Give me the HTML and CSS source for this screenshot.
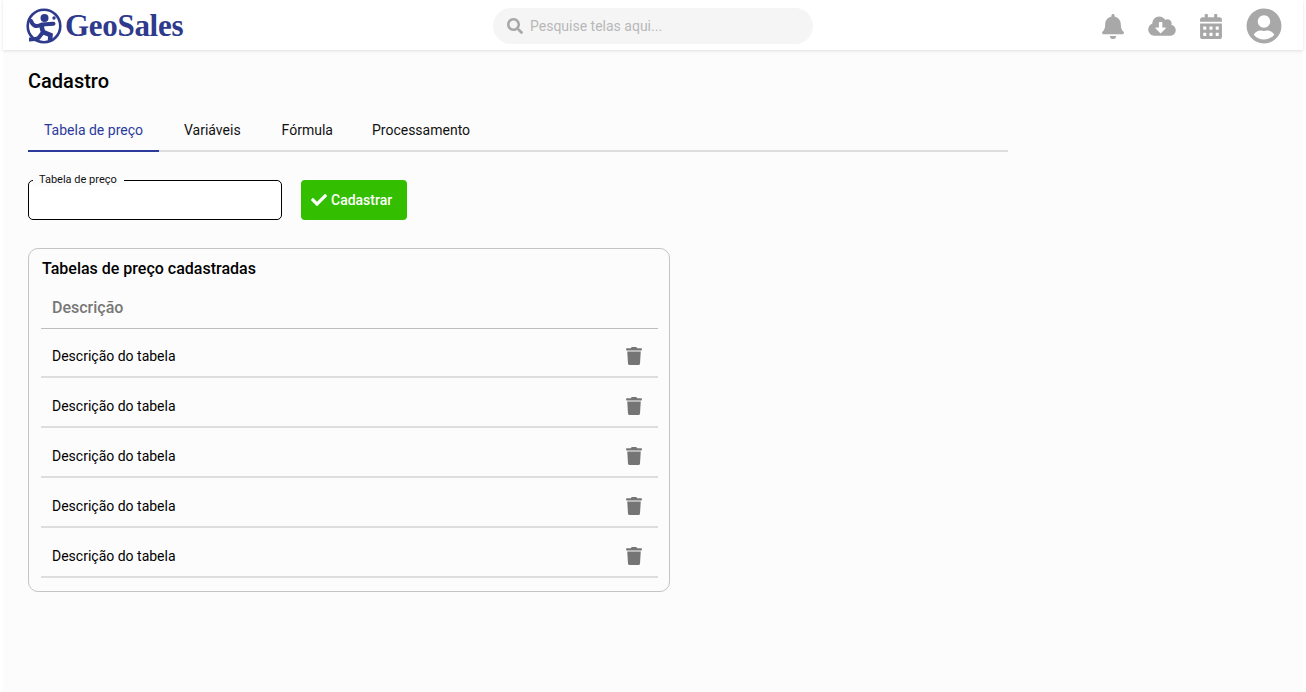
FILE: index.html
```html
<!DOCTYPE html>
<html lang="pt">
<head>
<meta charset="utf-8">
<title>GeoSales</title>
<link rel="stylesheet" href="styles.css">
</head>
<body>
<div class="app">
  <header class="topbar">
    <div class="logo">
      <svg class="logo-mark" viewBox="0 0 36 36">
        <circle cx="18" cy="18" r="16.3" fill="none" stroke="#2e3a8c" stroke-width="2.6"/>
        <circle cx="18.5" cy="10" r="4" fill="#2e3a8c"/>
        <circle cx="28" cy="10" r="1.7" fill="#2e3a8c"/>
        <path d="M5 13c2 5 5 6.500 11 3.500l11.500-.8" fill="none" stroke="#2e3a8c" stroke-width="4" stroke-linecap="round"/>
        <path d="M16 15.500c-.5 4 0 7 2 9l6.500 2.500-.5 6" fill="none" stroke="#2e3a8c" stroke-width="4.600"/>
        <path d="M17.500 23.500l-5 6.500c-3 1.500-6 1.500-9.500 1.500" fill="none" stroke="#2e3a8c" stroke-width="4"/>
      </svg>
      <span class="logo-text">GeoSales</span>
    </div>
    <div class="search">
      <svg class="search-icon" viewBox="0 0 512 512"><path d="M505 442.7L405.3 343c-4.500-4.500-10.600-7-17-7H372c27.600-35.300 44-79.700 44-128C416 93.100 322.900 0 208 0S0 93.100 0 208s93.100 208 208 208c48.300 0 92.700-16.400 128-44v16.300c0 6.400 2.500 12.500 7 17l99.700 99.700c9.400 9.400 24.600 9.400 33.900 0l28.300-28.300c9.400-9.400 9.400-24.600.1-34zM208 336c-70.700 0-128-57.200-128-128 0-70.700 57.200-128 128-128 70.700 0 128 57.200 128 128 0 70.700-57.200 128-128 128z"/></svg>
      <span class="search-text">Pesquise telas aqui...</span>
    </div>
    <div class="actions">
      <svg class="icon-bell" viewBox="0 0 448 512"><path d="M224 512c35.32 0 63.97-28.65 63.97-64H160.03c0 35.35 28.65 64 63.97 64zm215.39-149.71c-19.32-20.76-55.47-51.99-55.47-154.29 0-77.7-54.48-139.9-127.94-155.16V32c0-17.67-14.32-32-31.98-32s-31.98 14.33-31.98 32v20.84C118.56 68.1 64.08 130.3 64.08 208c0 102.3-36.15 133.53-55.47 154.29-6 6.45-8.66 14.16-8.61 21.71.11 16.4 12.98 32 32.1 32h383.8c19.12 0 32-15.6 32.1-32 .05-7.55-2.61-15.27-8.61-21.71z"/></svg>
      <svg class="icon-cloud" viewBox="0 0 640 512"><path d="M537.6 226.6c4.1-10.7 6.4-22.4 6.4-34.6 0-53-43-96-96-96-19.7 0-38.1 6-53.3 16.2C367 64.2 315.3 32 256 32c-88.4 0-160 71.6-160 160 0 2.7.1 5.4.2 8.1C40.2 219.8 0 273.2 0 336c0 79.5 64.5 144 144 144h368c70.7 0 128-57.3 128-128 0-61.9-44-113.6-102.4-125.4zm-132.9 88.7L299.3 420.7c-6.2 6.2-16.4 6.2-22.6 0L171.3 315.3c-10.1-10.1-2.9-27.3 11.3-27.3H248V176c0-8.8 7.2-16 16-16h48c8.8 0 16 7.2 16 16v112h65.4c14.2 0 21.4 17.2 11.3 27.3z"/></svg>
      <svg class="icon-calendar" viewBox="0 0 448 512"><path d="M0 464c0 26.5 21.5 48 48 48h352c26.5 0 48-21.5 48-48V192H0v272zm320-196c0-6.6 5.4-12 12-12h40c6.6 0 12 5.4 12 12v40c0 6.6-5.4 12-12 12h-40c-6.6 0-12-5.4-12-12v-40zm0 128c0-6.6 5.4-12 12-12h40c6.6 0 12 5.4 12 12v40c0 6.6-5.4 12-12 12h-40c-6.6 0-12-5.4-12-12v-40zM192 268c0-6.6 5.4-12 12-12h40c6.6 0 12 5.4 12 12v40c0 6.6-5.4 12-12 12h-40c-6.6 0-12-5.4-12-12v-40zm0 128c0-6.6 5.4-12 12-12h40c6.6 0 12 5.4 12 12v40c0 6.6-5.4 12-12 12h-40c-6.6 0-12-5.4-12-12v-40zM64 268c0-6.6 5.4-12 12-12h40c6.6 0 12 5.4 12 12v40c0 6.6-5.4 12-12 12H76c-6.6 0-12-5.4-12-12v-40zm0 128c0-6.6 5.4-12 12-12h40c6.6 0 12 5.4 12 12v40c0 6.6-5.4 12-12 12h-40c-6.6 0-12-5.4-12-12v-40zM400 64h-48V16c0-8.8-7.2-16-16-16h-32c-8.8 0-16 7.2-16 16v48H160V16c0-8.8-7.2-16-16-16h-32c-8.8 0-16 7.2-16 16v48H48C21.5 64 0 85.5 0 112v48h448v-48c0-26.5-21.5-48-48-48z"/></svg>
      <svg class="icon-user" viewBox="0 0 496 512"><path d="M248 8C111 8 0 119 0 256s111 248 248 248 248-111 248-248S385 8 248 8zm0 96c48.6 0 88 39.4 88 88s-39.4 88-88 88-88-39.4-88-88 39.4-88 88-88zm0 344c-58.7 0-111.3-26.6-146.5-68.2 18.8-35.4 55.6-59.8 98.5-59.8 2.4 0 4.8.4 7.1 1.1 13 4.2 26.6 6.9 40.9 6.9 14.3 0 28-2.7 40.9-6.9 2.3-.7 4.7-1.1 7.1-1.1 42.9 0 79.7 24.4 98.5 59.8C359.3 421.4 306.7 448 248 448z"/></svg>
    </div>
  </header>
  <main class="content">
    <h1 class="page-title">Cadastro</h1>
    <nav class="tabs">
      <span class="tab tab-active">Tabela de preço</span>
      <span class="tab">Variáveis</span>
      <span class="tab">Fórmula</span>
      <span class="tab tab-last">Processamento</span>
    </nav>
    <form class="form-row">
      <div class="field"><span class="field-label">Tabela de preço</span></div>
      <div class="btn">
        <svg class="btn-icon" viewBox="0 0 512 512"><path d="M173.898 439.404l-166.4-166.4c-9.997-9.997-9.997-26.206 0-36.204l36.203-36.204c9.997-9.998 26.207-9.998 36.204 0L192 312.69 432.095 72.596c9.997-9.997 26.207-9.997 36.204 0l36.203 36.204c9.997 9.997 9.997 26.206 0 36.204l-294.4 294.401c-9.998 9.997-26.207 9.997-36.204-.001z"/></svg>
        <span>Cadastrar</span>
      </div>
    </form>
    <section class="card">
      <h2 class="card-title">Tabelas de preço cadastradas</h2>
      <div class="table-head">Descrição</div>
      <div class="table-row"><span>Descrição do tabela</span><svg class="trash" viewBox="0 0 448 512"><path d="M432 32H312l-9.4-18.7A24 24 0 0 0 281.1 0H166.8a23.72 23.72 0 0 0-21.4 13.3L136 32H16A16 16 0 0 0 0 48v32a16 16 0 0 0 16 16h416a16 16 0 0 0 16-16V48a16 16 0 0 0-16-16zM53.2 467a48 48 0 0 0 47.9 45h245.8a48 48 0 0 0 47.9-45L416 128H32z"/></svg></div>
      <div class="table-row"><span>Descrição do tabela</span><svg class="trash" viewBox="0 0 448 512"><path d="M432 32H312l-9.4-18.7A24 24 0 0 0 281.1 0H166.8a23.72 23.72 0 0 0-21.4 13.3L136 32H16A16 16 0 0 0 0 48v32a16 16 0 0 0 16 16h416a16 16 0 0 0 16-16V48a16 16 0 0 0-16-16zM53.2 467a48 48 0 0 0 47.9 45h245.8a48 48 0 0 0 47.9-45L416 128H32z"/></svg></div>
      <div class="table-row"><span>Descrição do tabela</span><svg class="trash" viewBox="0 0 448 512"><path d="M432 32H312l-9.4-18.7A24 24 0 0 0 281.1 0H166.8a23.72 23.72 0 0 0-21.4 13.3L136 32H16A16 16 0 0 0 0 48v32a16 16 0 0 0 16 16h416a16 16 0 0 0 16-16V48a16 16 0 0 0-16-16zM53.2 467a48 48 0 0 0 47.9 45h245.8a48 48 0 0 0 47.9-45L416 128H32z"/></svg></div>
      <div class="table-row"><span>Descrição do tabela</span><svg class="trash" viewBox="0 0 448 512"><path d="M432 32H312l-9.4-18.7A24 24 0 0 0 281.1 0H166.8a23.72 23.72 0 0 0-21.4 13.3L136 32H16A16 16 0 0 0 0 48v32a16 16 0 0 0 16 16h416a16 16 0 0 0 16-16V48a16 16 0 0 0-16-16zM53.2 467a48 48 0 0 0 47.9 45h245.8a48 48 0 0 0 47.9-45L416 128H32z"/></svg></div>
      <div class="table-row"><span>Descrição do tabela</span><svg class="trash" viewBox="0 0 448 512"><path d="M432 32H312l-9.4-18.7A24 24 0 0 0 281.1 0H166.8a23.72 23.72 0 0 0-21.4 13.3L136 32H16A16 16 0 0 0 0 48v32a16 16 0 0 0 16 16h416a16 16 0 0 0 16-16V48a16 16 0 0 0-16-16zM53.2 467a48 48 0 0 0 47.9 45h245.8a48 48 0 0 0 47.9-45L416 128H32z"/></svg></div>
    </section>
  </main>
</div>
</body>
</html>
```

FILE: styles.css
```css
* { box-sizing: border-box; }
html, body { margin: 0; height: 100%; background: #fff; overflow: hidden; }
body { font-family: Roboto, "Liberation Sans", sans-serif; color: #000; }
.app { margin: 0 3px; height: 692px; background: #fcfcfc; }
.topbar {
  height: 50px; background: #fff; box-shadow: 0 1px 3px rgba(0,0,0,.12);
  display: grid; grid-template-columns: 1fr 320px 1fr; align-items: center; padding: 2px 23px 0;
}
.logo { display: flex; align-items: center; gap: 3px; }
.logo-mark { width: 36px; height: 36px; flex: none; }
.logo-text { font: bold 31px "Liberation Serif", serif; color: #2e3a8c; letter-spacing: -.3px; }
.search { grid-column: 2; height: 36px; border-radius: 18px; background: #f5f5f5; display: flex; align-items: center; gap: 7px; padding: 0 14px; }
.search-icon { width: 16px; height: 16px; fill: #a8a8a8; }
.search-text { font-size: 14px; color: #b8b8b8; }
.actions { display: flex; justify-content: flex-end; align-items: center; margin-right: -2px; }
.actions svg { fill: #a8a8a8; display: block; }
.icon-bell { width: 22px; height: 25px; margin-right: 24px; }
.icon-cloud { width: 28px; height: 22px; margin-right: 24px; }
.icon-calendar { width: 22px; height: 25px; margin-right: 24px; }
.icon-user { width: 36px; height: 36px; }
.content { padding: 19px 25px 0; }
.page-title { margin: 0; font-size: 20px; font-weight: 500; line-height: 24px; }
.tabs { margin-top: 17px; width: 980px; height: 42px; border-bottom: 2px solid #ddd; display: flex; gap: 9px; }
.tab { height: 42px; padding: 0 16px; font-size: 14px; line-height: 40px; color: #111; }
.tab-active { color: #2b3a9b; border-bottom: 2px solid #2b3a9b; }
.tab-last { margin-left: -2px; }
.form-row { margin-top: 28px; display: flex; gap: 19px; }
.field { position: relative; width: 254px; height: 40px; border: 1px solid #000; border-radius: 5px; background: #fff; }
.field-label { position: absolute; left: 4px; top: -8px; padding: 0 7px 0 6px; font-size: 11px; line-height: 14px; color: #111; background: #fcfcfc; }
.btn { width: 106px; height: 40px; padding-left: 10px; border-radius: 4px; background: #33be00; color: #fff; display: flex; align-items: center; gap: 4px; font-size: 14px; font-weight: 500; }
.btn-icon { width: 16px; height: 16px; fill: #fff; }
.card { margin-top: 28px; width: 642px; height: 344px; border: 1px solid #c4c4c4; border-radius: 10px; padding: 10px 11px 0 12px; }
.card-title { margin: 0 0 0 1px; font-size: 16px; font-weight: 500; line-height: 20px; }
.table-head { height: 50px; margin-bottom: -1px; padding: 9px 11px 0; border-bottom: 1px solid #bdbdbd; font-size: 16px; font-weight: 500; line-height: 22px; color: #777; display: flex; align-items: center; }
.table-row { height: 50px; padding: 8px 16px 0 11px; border-bottom: 2px solid #ddd; display: flex; align-items: center; justify-content: space-between; font-size: 14px; }
.trash { width: 16px; height: 18px; fill: #757575; }
```
